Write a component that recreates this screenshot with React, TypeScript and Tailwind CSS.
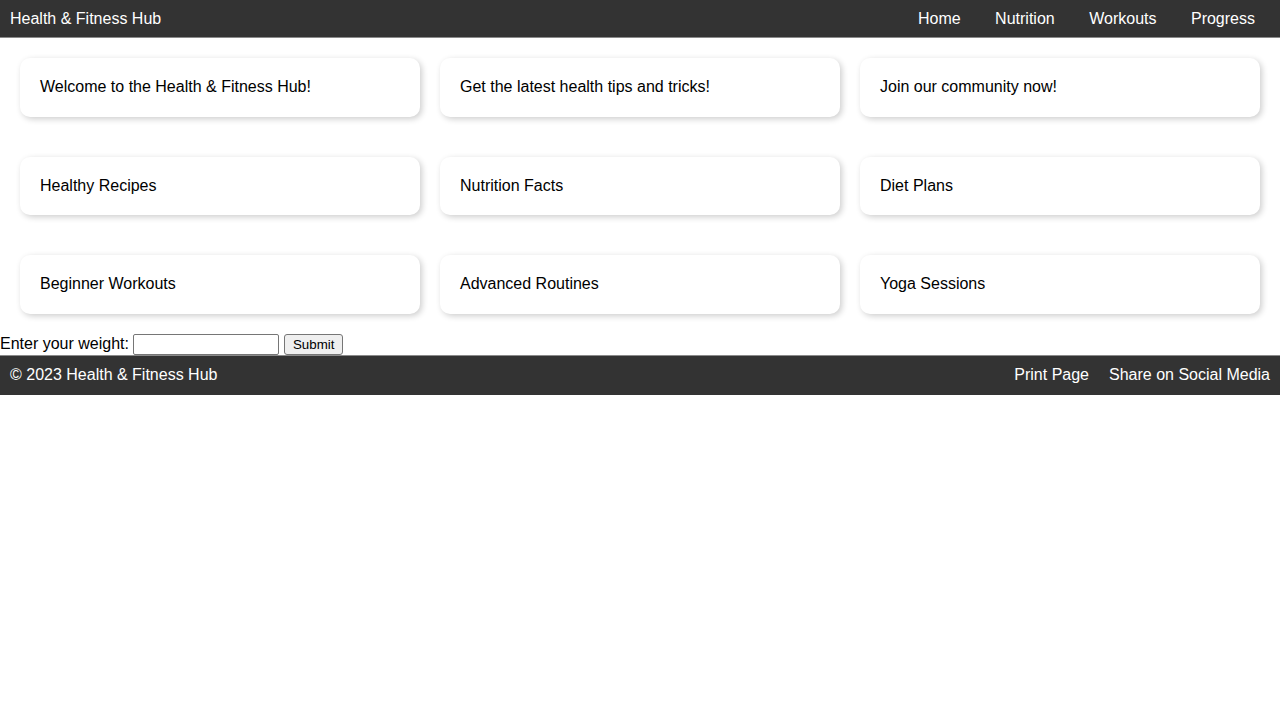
const sections = [
    ['Welcome to the Health & Fitness Hub!', 'Get the latest health tips and tricks!', 'Join our community now!'],
    ['Healthy Recipes', 'Nutrition Facts', 'Diet Plans'],
    ['Beginner Workouts', 'Advanced Routines', 'Yoga Sessions'],
];

const navLinks = ['Home', 'Nutrition', 'Workouts', 'Progress'];

export default function App() {
    return (
        <div className="min-h-[720px] bg-white text-black text-base leading-normal font-['Liberation_Sans',Arial,sans-serif]">
            <header className="flex flex-row items-center justify-between bg-[#333333] text-white leading-[18.4px] px-2.5 pt-2.5 pb-[9px] border-b border-[#8a8a8a]">
                <div>Health &amp; Fitness Hub</div>
                <nav className="flex flex-row gap-[4.5px]">
                    {navLinks.map((label) => (
                        <a key={label} href="#" className="px-[15px] text-white">
                            {label}
                        </a>
                    ))}
                </nav>
            </header>
            {sections.map((cards, index) => (
                <section key={index} className="flex flex-row gap-5 p-5">
                    {cards.map((text) => (
                        <div
                            key={text}
                            className="flex-1 bg-white rounded-[10px] p-5 leading-[18.4px] shadow-[2px_2px_6px_rgba(0,0,0,0.2)]"
                        >
                            {text}
                        </div>
                    ))}
                </section>
            ))}
            <form className="flex flex-row items-center h-[21.5px]" onSubmit={(e) => e.preventDefault()}>
                <label htmlFor="weight">Enter your weight:</label>
                <input
                    id="weight"
                    type="text"
                    className="ml-[4.5px] w-[146px] h-[21px] border border-[#767676] rounded-[2px] px-[2px] text-[13.33px] bg-white"
                />
                <button
                    type="submit"
                    className="ml-[5px] h-[21px] px-[7.5px] border border-[#767676] rounded-[3px] bg-[#efefef] text-[13.33px] leading-[15px] text-black"
                >
                    Submit
                </button>
            </form>
            <footer className="flex flex-row items-center justify-between bg-[#333333] text-white leading-[18.4px] px-2.5 py-2.5 border-t border-[#8a8a8a]">
                <div>© 2023 Health &amp; Fitness Hub</div>
                <div className="flex flex-row gap-5">
                    <a href="#" className="text-white">Print Page</a>
                    <a href="#" className="text-white">Share on Social Media</a>
                </div>
            </footer>
        </div>
    );
}
